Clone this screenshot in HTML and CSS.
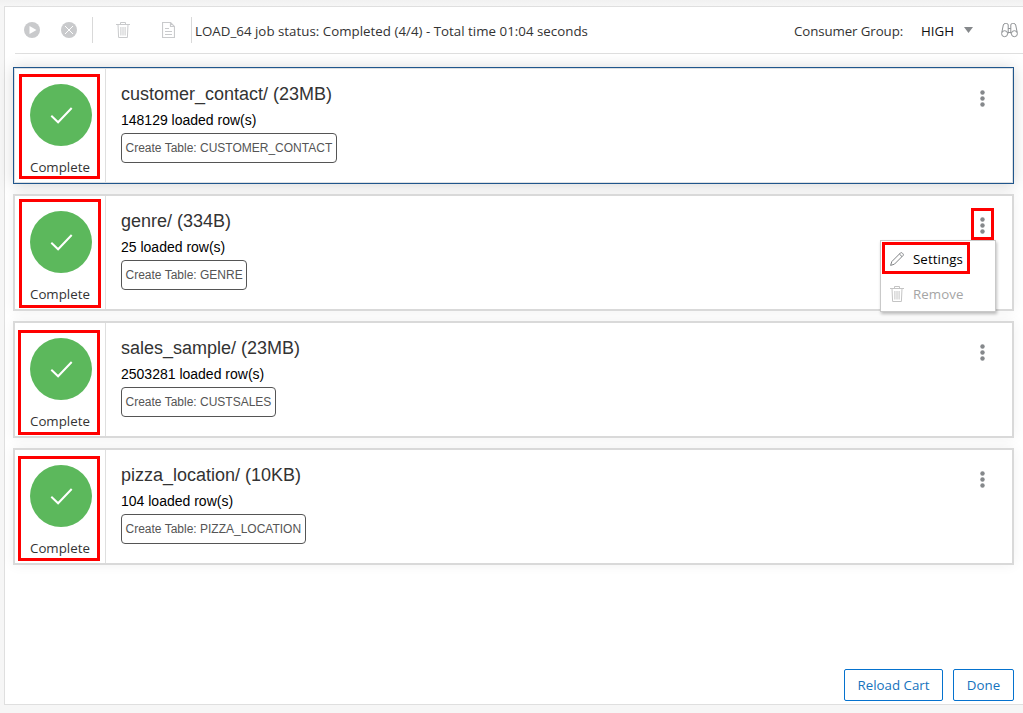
FILE: index.html
```html
<!DOCTYPE html>
<html lang="en">
<head>
<meta charset="utf-8">
<title>Data load</title>
<link rel="stylesheet" href="styles.css">
</head>
<body>
<svg class="defs" width="0" height="0">
  <symbol id="trash" viewBox="0 0 14 16"><path d="M0 2.500h14M4.500 2.500v-2h5v2M2 2.500l.6 13h8.800l.6-13M4.900 5v8.500M7 5v8.500M9.100 5v8.500" fill="none" stroke="currentColor"/></symbol>
  <symbol id="check" viewBox="0 0 62 62"><path d="M21.300 31.800l6.800 6.500L41.700 24" fill="none" stroke="#fff" stroke-width="2"/></symbol>
  <symbol id="dots" viewBox="0 0 5 17"><circle cx="2.500" cy="2.500" r="2.200"/><circle cx="2.500" cy="8.500" r="2.200"/><circle cx="2.500" cy="14.500" r="2.200"/></symbol>
</svg>
<main class="panel">
  <header class="toolbar">
    <svg class="tool run" viewBox="0 0 16 16"><circle cx="8" cy="8" r="8" fill="currentColor"/><path d="M5.500 4v8l7-4z" fill="#fff"/></svg>
    <svg class="tool stop" viewBox="0 0 16 16"><circle cx="8" cy="8" r="8" fill="currentColor"/><path d="M4 4l8 8M12 4l-8 8" stroke="#fff"/></svg>
    <span class="divider"></span>
    <svg class="tool bin"><use href="#trash"/></svg>
    <svg class="tool report" viewBox="0 0 13 16"><path d="M.5.5h8l4 4v11H.5zM8.500.5v4h4M3 6.500h4M3 9.500h7M3 12.500h7" fill="none" stroke="currentColor" stroke-width="1.200"/></svg>
    <span class="divider last"></span>
    <span class="status">LOAD_64 job status: Completed (4/4) - Total time 01:04 seconds</span>
    <span class="group">Consumer Group:</span>
    <span class="level">HIGH</span>
    <svg class="caret" viewBox="0 0 9 6"><path d="M0 0h9L4.500 6z" fill="#85888b"/></svg>
    <svg class="binoculars" viewBox="0 0 17 15"><g fill="none" stroke="#8f9295"><circle cx="3.600" cy="10.700" r="3"/><circle cx="13.400" cy="10.700" r="3"/><path d="M.8 9.500L2.300 2Q2.700.5 4.300.5H5.500Q7.200.5 7.200 2V10.500M16.200 9.500L14.700 2Q14.300.5 12.700.5H11.500Q9.800.5 9.800 2V10.500M7.200 5.500H9.800M6.700 9.500H10.300"/></g></svg>
  </header>
  <section class="cards">
    <article class="card selected">
      <div class="state"><svg class="disc"><use href="#check"/></svg><span>Complete</span></div>
      <div class="info"><h2>customer_contact/ (23MB)</h2><p>148129 loaded row(s)</p><span class="chip">Create Table: CUSTOMER_CONTACT</span></div>
      <svg class="dots"><use href="#dots"/></svg>
    </article>
    <article class="card">
      <div class="state"><svg class="disc"><use href="#check"/></svg><span>Complete</span></div>
      <div class="info"><h2>genre/ (334B)</h2><p>25 loaded row(s)</p><span class="chip">Create Table: GENRE</span></div>
      <svg class="dots"><use href="#dots"/></svg>
    </article>
    <article class="card">
      <div class="state"><svg class="disc"><use href="#check"/></svg><span>Complete</span></div>
      <div class="info"><h2>sales_sample/ (23MB)</h2><p>2503281 loaded row(s)</p><span class="chip">Create Table: CUSTSALES</span></div>
      <svg class="dots"><use href="#dots"/></svg>
    </article>
    <article class="card">
      <div class="state"><svg class="disc"><use href="#check"/></svg><span>Complete</span></div>
      <div class="info"><h2>pizza_location/ (10KB)</h2><p>104 loaded row(s)</p><span class="chip">Create Table: PIZZA_LOCATION</span></div>
      <svg class="dots"><use href="#dots"/></svg>
    </article>
  </section>
  <footer class="actions">
    <button class="button reload">Reload Cart</button>
    <button class="button done">Done</button>
  </footer>
</main>
<div class="menu">
  <div class="item"><svg class="pencil" viewBox="0 0 14 14"><path d="M.6 13.400L1.800 9.600L10.600.8Q11.500.3 12.400 1.200L12.900 1.700Q13.700 2.600 13.200 3.400L4.400 12.200zM9.400 2L12 4.600" fill="none" stroke="#808386"/></svg><span>Settings</span></div>
  <div class="item disabled"><svg class="bin"><use href="#trash"/></svg><span>Remove</span></div>
</div>
<div class="mark mark-first"></div>
<div class="mark mark-second"></div>
<div class="mark mark-third"></div>
<div class="mark mark-fourth"></div>
<div class="mark mark-dots"></div>
<div class="mark mark-settings"></div>
</body>
</html>
```
FILE: styles.css
```css
* { box-sizing: border-box; }
body { margin: 0; height: 713px; overflow: hidden; position: relative; padding: 6px 0 0 4px; background: linear-gradient(#f1f1f1, #f6f6f6 6px); font: 13.3px/20px "Open Sans", "Noto Sans", sans-serif; color: #333; white-space: nowrap; }
svg { display: block; flex: none; }
.defs { position: absolute; }
.panel { display: flex; flex-direction: column; height: 699px; border: 1px solid #dfdfdf; border-right: 0; background: #fff; }
.toolbar { display: flex; align-items: center; height: 47px; margin-left: 10px; padding-left: 9px; border-bottom: 1px solid #dfdfdf; flex: none; }
.tool { width: 16px; height: 16px; color: #c9cacc; }
.stop { margin-left: 21px; }
.divider { width: 1px; height: 26px; background: #d9d9d9; margin-left: 15px; }
.divider.last { margin-left: 16px; }
.toolbar .bin { width: 14px; margin-left: 23px; }
.report { width: 13px; margin-left: 32px; }
.status, .group, .level { padding-top: 2px; }
.status { margin-left: 3px; width: 599px; letter-spacing: .02px; }
.group { width: 127px; letter-spacing: -.1px; }
.level { width: 43px; color: #111; }
.caret { width: 9px; height: 6px; }
.binoculars { width: 17px; height: 15px; margin-left: 28px; }
.cards { display: flex; flex-direction: column; gap: 10px; padding: 13px 9px 0 8px; }
.card { display: flex; height: 117px; border: 2px solid #d9d9d9; background: #fff; box-shadow: 0 0 12px rgba(0,0,0,.06); position: relative; }
.card.selected { border: 1px solid #20568c; box-shadow: inset 0 0 0 1px #dcdfe2, 0 1px 14px rgba(0,0,0,.17); padding: 1px; }
.state { width: 91px; border-right: 1px solid #dfdfdf; padding: 15px 0 0 15px; }
.disc { width: 62px; height: 62px; border-radius: 50%; background: #5cb85c; }
.state span { display: block; margin-top: 11px; }
.info { flex: 1; padding: 14px 0 0 15px; font-family: "Liberation Sans", Arial, sans-serif; }
.info h2 { margin: 0; font-size: 18px; line-height: 22px; font-weight: 400; }
.info p { margin: 5px 0 4px; font-size: 14px; line-height: 20px; height: 19px; color: #000; }
.chip { display: inline-block; height: 30px; padding: 0 3.5px; border: 1px solid #555; border-radius: 4px; font-size: 12px; line-height: 28px; color: #555; }
.dots { width: 5px; height: 17px; margin: 21px 27px 0 0; fill: #85888b; }
.actions { display: flex; justify-content: flex-end; gap: 10px; margin-top: auto; padding: 0 9px 3px 0; }
.button { height: 32px; padding: 0; border: 1px solid #0572ce; border-radius: 2px; background: #fff; color: #1673bd; font: inherit; }
.reload { width: 99px; }
.done { width: 61px; }
.menu { position: absolute; left: 880px; top: 240px; width: 116px; height: 72px; border: 1px solid #c9c9c9; background: #fff; box-shadow: 1px 2px 3px rgba(0,0,0,.25); color: #000; letter-spacing: .08px; }
.item { display: flex; align-items: center; height: 35px; padding-left: 9px; }
.pencil { width: 14px; height: 14px; margin-right: 9px; }
.menu .bin { width: 14px; height: 16px; margin-right: 9px; color: #c4c4c4; }
.disabled { color: #a5a5a5; }
.mark { position: absolute; border: 3px solid #f00; }
.mark-first { left: 19px; top: 74px; width: 81px; height: 105px; }
.mark-second { left: 19px; top: 199px; width: 82px; height: 109px; }
.mark-third { left: 18px; top: 330px; width: 82px; height: 105px; }
.mark-fourth { left: 18px; top: 456px; width: 82px; height: 105px; }
.mark-dots { left: 971px; top: 208px; width: 23px; height: 32px; }
.mark-settings { left: 882px; top: 242px; width: 88px; height: 32px; }
```
